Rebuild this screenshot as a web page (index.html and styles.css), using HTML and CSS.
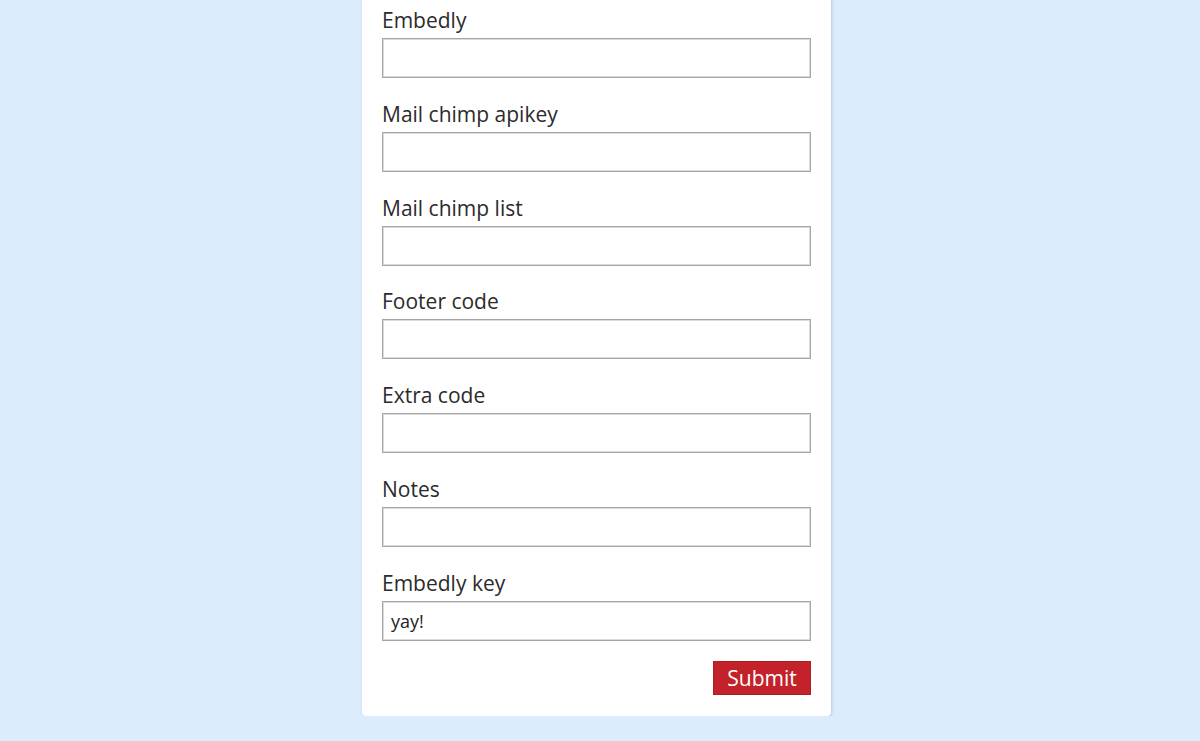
FILE: index.html
```html
<!DOCTYPE html>
<html>
<head>
<meta charset="utf-8">
<link rel="stylesheet" href="styles.css">
</head>
<body>
<div class="card">
  <form class="form">
    <div class="field"><label class="label">Embedly</label><input class="input" type="text"></div>
    <div class="field"><label class="label">Mail chimp apikey</label><input class="input" type="text"></div>
    <div class="field"><label class="label">Mail chimp list</label><input class="input" type="text"></div>
    <div class="field"><label class="label">Footer code</label><input class="input" type="text"></div>
    <div class="field"><label class="label">Extra code</label><input class="input" type="text"></div>
    <div class="field"><label class="label">Notes</label><input class="input" type="text"></div>
    <div class="field"><label class="label">Embedly key</label><input class="input" type="text" value="yay!"></div>
    <div class="actions"><button class="submit" type="button">Submit</button></div>
  </form>
</div>
</body>
</html>
```
FILE: styles.css
```css
html, body {
  margin: 0;
  padding: 0;
  background: #dcecfd;
  font-family: "Open Sans", "Liberation Sans", sans-serif;
}
.card {
  width: 469px;
  box-sizing: border-box;
  margin: -14px auto 0 362px;
  background: #fff;
  border-radius: 0 0 4px 4px;
  padding: 20px 20px 21px;
  box-shadow: 1px 1px 3px rgba(120, 140, 170, 0.35);
}
.form {
  display: flex;
  flex-direction: column;
  gap: 21.83px;
}
.field {
  display: flex;
  flex-direction: column;
  gap: 4px;
}
.label {
  font-size: 21px;
  line-height: 28px;
  color: #2b2b2b;
}
.input {
  box-sizing: border-box;
  height: 40px;
  width: 100%;
  margin: 0;
  border: 1px solid #a6a6a6;
  box-shadow: inset 0 0 0 1px #dadada;
  border-radius: 0;
  padding: 0 8px;
  font-family: "Open Sans", "Liberation Sans", sans-serif;
  font-size: 18px;
  color: #222;
  background: #fff;
  outline: none;
}
.actions {
  display: flex;
  justify-content: flex-end;
  margin-top: -1.8px;
}
.submit {
  height: 34px;
  width: 98px;
  border: 1px solid #b01c22;
  background: #c4222a;
  color: #fff;
  font-family: "Open Sans", "Liberation Sans", sans-serif;
  font-size: 21px;
  line-height: 30px;
  padding: 0;
  border-radius: 0;
}
```
